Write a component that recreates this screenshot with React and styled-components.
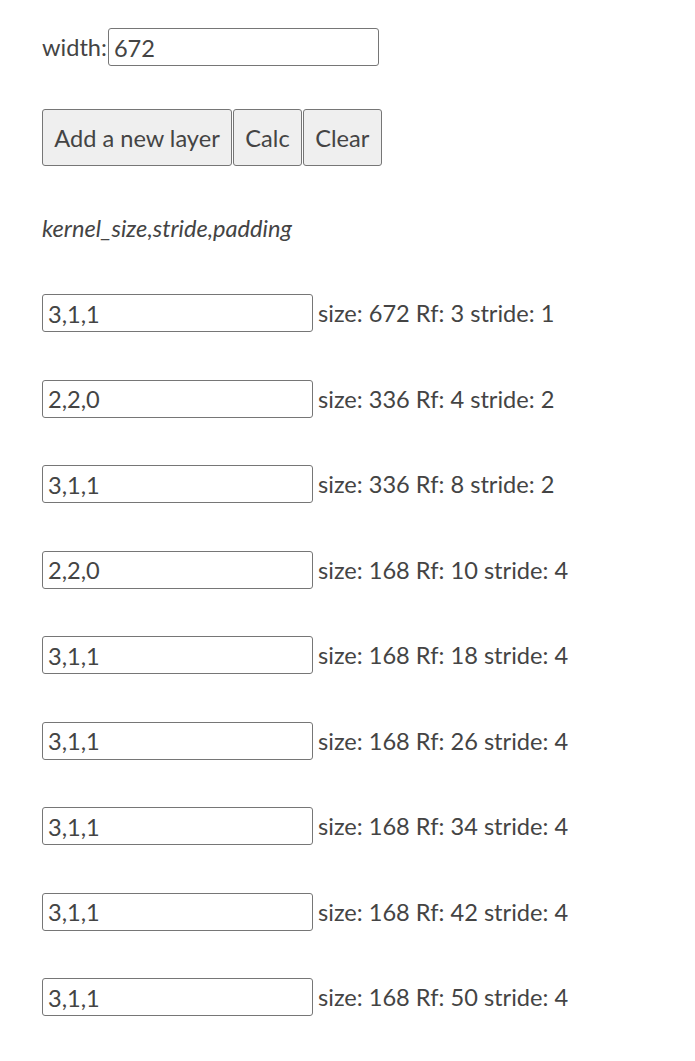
import React from 'react'
import styled, { createGlobalStyle } from 'styled-components'

const GlobalStyle = createGlobalStyle`
  body {
    margin: 0;
    background: #fff;
    font-family: Lato, "Open Sans", sans-serif;
    color: #444;
  }
`

const Page = styled.div`
  padding: 28px 42px;
  font-size: 23.6px;
  display: flex;
  flex-direction: column;
`

const WidthRow = styled.label`
  display: flex;
  align-items: center;
  height: 38px;
  margin-bottom: 43px;
`

const Field = styled.input`
  box-sizing: border-box;
  width: ${props => props.w}px;
  height: 38px;
  margin: 0 0 0 ${props => props.ml || 0}px;
  padding: 1px 5px 0;
  font-family: inherit;
  font-size: 23.6px;
  color: #444;
  border: 1px solid #767676;
  border-radius: 3px;
  background: #fff;
`

const Toolbar = styled.div`
  display: flex;
  gap: 1px;
`

const Button = styled.button`
  box-sizing: border-box;
  height: 57px;
  margin: 0;
  padding: 0 11.3px;
  font-family: inherit;
  font-size: 23.6px;
  color: #444;
  background: #efefef;
  border: 1px solid #767676;
  border-radius: 3px;
  cursor: pointer;
`

const Hint = styled.p`
  margin: 48px 0 51px;
  font-style: italic;
  line-height: 29px;
`

const Layers = styled.div`
  display: flex;
  flex-direction: column;
  gap: 47.5px;
`

const Row = styled.div`
  display: flex;
  align-items: center;
  height: 38px;
`

const Info = styled.span`
  margin-left: 5px;
`

const initial = ['3,1,1', '2,2,0', '3,1,1', '2,2,0', '3,1,1', '3,1,1', '3,1,1', '3,1,1', '3,1,1']

const calc = (width, layers) => {
  let size = width
  let rf = 1
  let stride = 1
  return layers.map(l => {
    const [k, s, p] = l.split(',').map(Number)
    rf = rf + (k - 1) * stride
    size = Math.floor((size + 2 * p - k) / s) + 1
    stride = stride * s
    return { size, rf, stride }
  })
}

const App = () => {
  const [width, setWidth] = React.useState('672')
  const [layers, setLayers] = React.useState(initial)
  const [results, setResults] = React.useState(() => calc(672, initial))

  const update = (i, v) => {
    const next = layers.slice()
    next[i] = v
    setLayers(next)
  }

  return (
    <Page>
      <GlobalStyle />
      <WidthRow>
        width:<Field w={271} ml={1} value={width} onChange={e => setWidth(e.target.value)} />
      </WidthRow>
      <Toolbar>
        <Button onClick={() => setLayers([...layers, '3,1,1'])}>Add a new layer</Button>
        <Button onClick={() => setResults(calc(Number(width), layers))}>Calc</Button>
        <Button onClick={() => { setLayers([]); setResults([]) }}>Clear</Button>
      </Toolbar>
      <Hint>kernel_size,stride,padding</Hint>
      <Layers>
        {layers.map((l, i) => (
          <Row key={i}>
            <Field w={271} value={l} onChange={e => update(i, e.target.value)} />
            {results[i] && (
              <Info>size: {results[i].size} Rf: {results[i].rf} stride: {results[i].stride}</Info>
            )}
          </Row>
        ))}
      </Layers>
    </Page>
  )
}

export default App
